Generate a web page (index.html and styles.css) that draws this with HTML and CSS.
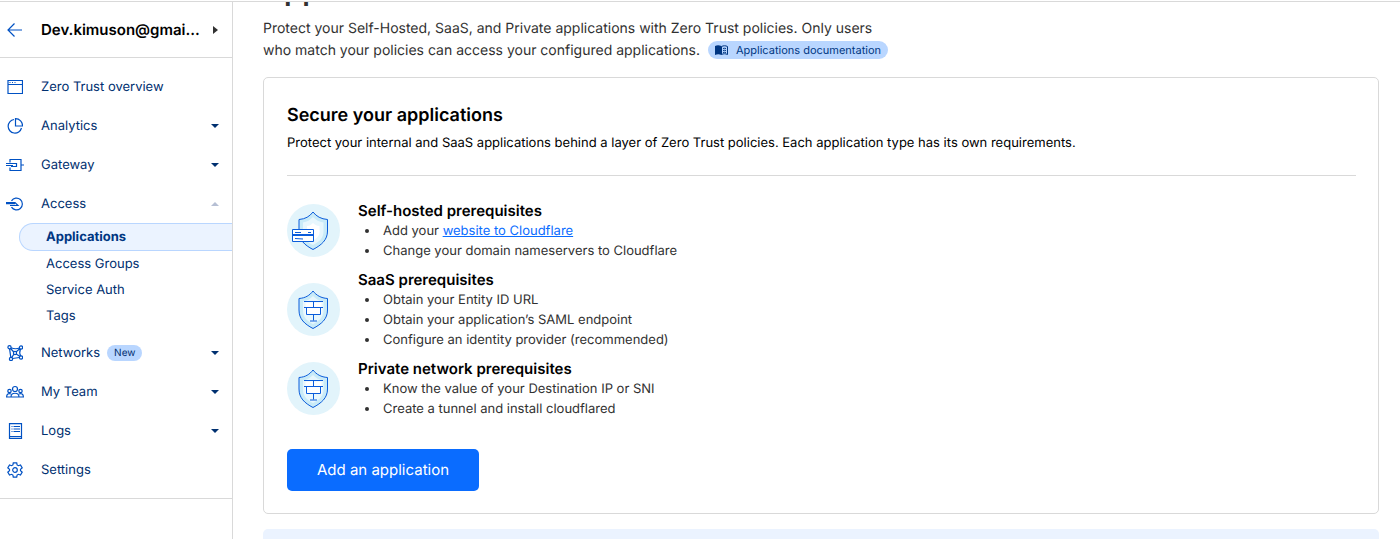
FILE: index.html
```
<!DOCTYPE html>
<html lang="en">

<head>
    <meta charset="UTF-8">
    <meta name="viewport" content="width=device-width, initial-scale=1.0">
    <title>Applications | Zero Trust</title>
    <link rel="stylesheet" href="styles.css">
</head>

<body>
    <aside class="sidebar">
        <div class="account">
            <a class="back" href="#" aria-label="Back">
                <svg class="icon" viewBox="0 0 16 16"><path d="M15 8H1.5M7.500 1.500L1 8l6.500 6.500"/></svg>
            </a>
            <button class="account-name" type="button">
                <span>Dev.kimuson@gmai...</span>
                <svg class="caret-right" viewBox="0 0 5 8"><path d="M0 0l5 4-5 4z"/></svg>
            </button>
        </div>

        <nav class="nav">
            <a class="nav-item" href="#">
                <svg class="icon" viewBox="0 0 16 16"><path d="M1 1.500h14.500v13H1zM1 5.500h14.500"/><path d="M2.500 3.500h1M5 3.500h1M7.500 3.500h1"/></svg>
                <span>Zero Trust overview</span>
            </a>
            <a class="nav-item" href="#">
                <svg class="icon" viewBox="0 0 16 16"><path d="M7 1.500a6.800 6.800 0 1 0 7.500 8.500"/><path d="M8.500.600a7 7 0 0 1 7 7.400h-7z"/></svg>
                <span>Analytics</span>
                <svg class="caret" viewBox="0 0 8 4"><path d="M0 0h8L4 4z"/></svg>
            </a>
            <a class="nav-item" href="#">
                <svg class="icon icon-wide" viewBox="0 0 18 16"><path d="M4 5.500v-3h11v11H4v-3M0 6.500h10.500v3H5M0 8.500h7M15 8h3"/></svg>
                <span>Gateway</span>
                <svg class="caret" viewBox="0 0 8 4"><path d="M0 0h8L4 4z"/></svg>
            </a>
            <a class="nav-item" href="#">
                <svg class="icon icon-wide" viewBox="0 0 18 16"><path d="M5.500 4.800a5.900 5.900 0 1 1 0 6.400M0 6.500h9l3 3H4M0 7.700h9"/></svg>
                <span>Access</span>
                <svg class="caret caret-open" viewBox="0 0 8 4"><path d="M0 4h8L4 0z"/></svg>
            </a>
            <div class="subnav">
                <a class="subnav-item active" href="#">Applications</a>
                <a class="subnav-item" href="#">Access Groups</a>
                <a class="subnav-item" href="#">Service Auth</a>
                <a class="subnav-item" href="#">Tags</a>
            </div>
            <a class="nav-item" href="#">
                <svg class="icon" viewBox="0 0 16 16"><circle cx="2.500" cy="2.200" r="1.600"/><circle cx="14" cy="2.500" r="1.600"/><circle cx="4" cy="14" r="1.600"/><circle cx="14" cy="12.500" r="1.600"/><circle cx="8" cy="8" r="1.600"/><path d="M4 2.800c3 1.200 6 1.200 8.500.2M2.600 3.800l1.200 8.600M5.500 13.500l7-1M13.500 4c-1 2.500-1 5 .2 7M9 7l4-3.500M9.200 9l3.800 2.600M7 9l-2.300 3.600M6.800 7L3.600 3.500"/></svg>
                <span>Networks</span>
                <span class="badge">New</span>
                <svg class="caret" viewBox="0 0 8 4"><path d="M0 0h8L4 4z"/></svg>
            </a>
            <a class="nav-item" href="#">
                <svg class="icon icon-wide" viewBox="0 0 18 16"><circle cx="9" cy="5" r="2.500"/><circle cx="3.500" cy="7" r="1.700"/><circle cx="14.500" cy="7" r="1.700"/><path d="M5 13c0-5 8-5 8 0zM5 13H.6c0-3 1.900-4 4.400-3M13 13h4.400c0-3-1.900-4-4.400-3"/></svg>
                <span>My Team</span>
                <svg class="caret" viewBox="0 0 8 4"><path d="M0 0h8L4 4z"/></svg>
            </a>
            <a class="nav-item" href="#">
                <svg class="icon" viewBox="0 0 16 16"><path d="M2.500.600h12v14.800h-12zM2.500 13.500h12M4.500 3.500h1M6.500 3.500H13M4.500 6h1M6.500 6H13M4.500 8.500h1M6.500 8.500H13"/></svg>
                <span>Logs</span>
                <svg class="caret" viewBox="0 0 8 4"><path d="M0 0h8L4 4z"/></svg>
            </a>
            <a class="nav-item" href="#">
                <svg class="icon" viewBox="0 0 16 16"><circle cx="8" cy="8" r="2.300"/><path d="M6.300.8h3.400l.4 2.100 1.300.8 2.100-.8 1.700 3-1.700 1.400v1.400l1.700 1.400-1.700 3-2.100-.8-1.300.8-.4 2.100H6.300l-.4-2.100-1.300-.8-2.100.8-1.700-3 1.700-1.400V7.300L.8 5.900l1.700-3 2.100.8 1.300-.8z"/></svg>
                <span>Settings</span>
            </a>
        </nav>
    </aside>

    <main class="content">
        <h1>Applications</h1>
        <p class="intro">
            Protect your Self-Hosted, SaaS, and Private applications with Zero Trust policies. Only users who match your policies can access your configured applications.
            <a class="docs" href="#">
                <svg viewBox="0 0 13 10"><path class="book-left" d="M0 1c2-1 4-1 6.500 0v9C4.500 9 2 9 0 10z"/><path class="book-right" d="M6.500 1.500c2-1 4-1 6 0v8c-2-1-4-1-6 0zM8 3.500q1.500-.5 3 0M8 5.500q1.500-.5 3 0M8 7.500q1.500-.5 3 0"/></svg>
                <span>Applications documentation</span>
            </a>
        </p>

        <section class="card">
            <h2>Secure your applications</h2>
            <p class="card-text">Protect your internal and SaaS applications behind a layer of Zero Trust policies. Each application type has its own requirements.</p>
            <hr>

            <div class="requirements">
                <div class="requirement">
                    <svg class="shield" viewBox="0 0 53 53">
                        <circle class="disc" cx="26.500" cy="26.500" r="26.500"/>
                        <path class="outer" d="M26 8c3.500 4.500 8 7 14.500 7.500v11.500c0 9-6 14-14.500 18.500C17.500 41 12 36 12 27V15.500C18.500 15 22.500 12.500 26 8z"/>
                        <path class="middle" d="M26 13c3 3 6 5 10.500 5.500v9c0 6.500-4 10-10.500 13.500-6.500-3.500-10-7-10-13.500v-9C20 18 23 16 26 13z"/>
                        <path class="inner" d="M26 19c2 2 4 3 6.500 3v6c0 4-2.500 6-6.500 8.500-4-2.500-6-4.500-6-8.500v-6c2.500 0 4-1 6-3z"/>
                        <path class="panel" d="M5.500 25.500h21v12h-21z"/>
                        <path class="line" d="M5.500 30.500h21M5.500 31.500h21M8 28.500h6M21 28.500h3M8 34.500l8 .5"/>
                    </svg>
                    <div>
                        <h3>Self-hosted prerequisites</h3>
                        <ul>
                            <li>Add your <a href="#">website to Cloudflare</a></li>
                            <li>Change your domain nameservers to Cloudflare</li>
                        </ul>
                    </div>
                </div>
                <div class="requirement">
                    <svg class="shield" viewBox="0 0 53 53">
                        <circle class="disc" cx="26.500" cy="26.500" r="26.500"/>
                        <path class="outer" d="M26 8c3.500 4.500 8 7 14.500 7.500v11.500c0 9-6 14-14.500 18.500C17.500 41 12 36 12 27V15.500C18.500 15 22.500 12.500 26 8z"/>
                        <path class="middle" d="M26 13c3 3 6 5 10.500 5.500v9c0 6.500-4 10-10.500 13.500-6.500-3.500-10-7-10-13.500v-9C20 18 23 16 26 13z"/>
                        <path class="wall" d="M18.500 19.500h16v12.500h-16z"/>
                        <path class="line" d="M17 18.500h19M17 24.500h19M26.500 18.500v6M19.500 24.500v7h14v-7M26.500 31.500v6M23 38h7"/>
                    </svg>
                    <div>
                        <h3>SaaS prerequisites</h3>
                        <ul>
                            <li>Obtain your Entity ID URL</li>
                            <li>Obtain your application’s SAML endpoint</li>
                            <li>Configure an identity provider (recommended)</li>
                        </ul>
                    </div>
                </div>
                <div class="requirement">
                    <svg class="shield" viewBox="0 0 53 53">
                        <circle class="disc" cx="26.500" cy="26.500" r="26.500"/>
                        <path class="outer" d="M26 8c3.500 4.500 8 7 14.500 7.500v11.500c0 9-6 14-14.500 18.500C17.500 41 12 36 12 27V15.500C18.500 15 22.500 12.500 26 8z"/>
                        <path class="middle" d="M26 13c3 3 6 5 10.500 5.500v9c0 6.500-4 10-10.500 13.500-6.500-3.500-10-7-10-13.500v-9C20 18 23 16 26 13z"/>
                        <path class="wall" d="M18.500 19.500h16v12.500h-16z"/>
                        <path class="line" d="M17 18.500h19M17 24.500h19M26.500 18.500v6M19.500 24.500v7h14v-7M26.500 31.500v6M23 38h7"/>
                    </svg>
                    <div>
                        <h3>Private network prerequisites</h3>
                        <ul>
                            <li>Know the value of your Destination IP or SNI</li>
                            <li>Create a tunnel and install cloudflared</li>
                        </ul>
                    </div>
                </div>
            </div>

            <button class="add-button" type="button">Add an application</button>
        </section>

        <div class="notice"></div>
    </main>
</body>

</html>
```

FILE: styles.css
```
* {
    box-sizing: border-box;
}

body {
    margin: 0;
    display: flex;
    height: 100vh;
    padding-top: 1px;
    overflow: hidden;
    font-family: Inter, "Liberation Sans", sans-serif;
    font-size: 13px;
    line-height: 20px;
    text-rendering: geometricPrecision;
    color: #313131;
    background-color: white;
}

h1, h2, h3, p, ul {
    margin: 0;
}

a {
    color: #0a6cff;
}

button {
    font-family: inherit;
    text-rendering: inherit;
    border: none;
    cursor: pointer;
}

/* Sidebar */
.sidebar {
    flex: none;
    width: 233px;
    border-top: 1px solid #d9d9d9;
    border-right: 1px solid #d9d9d9;
}

.account {
    display: flex;
    align-items: center;
    height: 56px;
    padding: 0 14px 0 7px;
    border-bottom: 1px solid #d9d9d9;
}

.back {
    display: flex;
}

.account-name {
    flex: 1;
    display: flex;
    align-items: center;
    justify-content: space-between;
    padding: 0 0 0 18px;
    background: none;
    font-size: 15px;
    font-weight: 600;
    line-height: 20px;
    color: black;
}

.icon {
    flex: none;
    width: 16px;
    height: 16px;
    fill: none;
    stroke: #0051c3;
    stroke-width: 1.2;
}

.icon-wide {
    width: 18px;
    margin: 0 -1px;
}

.caret-right {
    width: 5px;
    height: 8px;
    fill: #313131;
}

.nav {
    padding: 9px 0;
    border-bottom: 1px solid #d9d9d9;
}

.nav-item {
    display: flex;
    align-items: center;
    height: 39px;
    padding: 0 13px 0 7px;
    color: #003070;
    text-decoration: none;
}

.nav-item span {
    margin-left: 18px;
}

.nav-item .badge {
    margin-left: 7px;
    padding: 0 7px;
    border-radius: 8px;
    background-color: #b9d6ff;
    font-size: 10px;
    line-height: 16px;
}

.caret {
    width: 8px;
    height: 4px;
    margin-left: auto;
    fill: #003070;
}

.caret-open {
    fill: #b6bfd4;
}

.subnav {
    padding: 0 0 4px 19px;
}

.subnav-item {
    display: block;
    padding: 3px 0 3px 27px;
    color: #003070;
    text-decoration: none;
}

.subnav-item.active {
    padding-left: 26px;
    border: 1px solid #b9d6ff;
    border-right: none;
    border-radius: 14px 0 0 14px;
    background-color: #ebf3ff;
    font-weight: 700;
    color: #003682;
}

/* Main content */
.content {
    flex: 1;
    padding: 0 21px 0 30px;
    border-top: 1px solid #d9d9d9;
    overflow: hidden;
}

/* The page is scrolled, so only the bottom of the title shows */
h1 {
    margin-top: -28px;
    font-size: 29px;
    font-weight: 600;
    line-height: 32px;
}

.intro {
    max-width: 640px;
    margin-top: 12px;
    font-size: 14px;
    line-height: 22px;
}

.docs {
    display: inline-flex;
    align-items: center;
    gap: 8px;
    margin-left: 4px;
    padding: 0 7px;
    border-radius: 9px;
    background-color: #b9d6ff;
    font-size: 11px;
    line-height: 18px;
    color: #003682;
    text-decoration: none;
}

.docs svg {
    width: 13px;
    height: 10px;
}

.book-left {
    fill: #003682;
}

.book-right {
    fill: none;
    stroke: #003682;
}

.card {
    margin-top: 15px;
    padding: 27px 22px 22px 23px;
    border: 1px solid #d9d9d9;
    border-radius: 5px;
}

h2 {
    font-size: 18px;
    font-weight: 600;
    line-height: 22px;
    color: black;
}

.card-text {
    margin-top: 6px;
    color: black;
}

hr {
    margin: 22px 0 24px;
    border: none;
    border-top: 1px solid #d9d9d9;
}

.requirements {
    display: grid;
    gap: 8px;
}

.requirement {
    display: flex;
    align-items: center;
    gap: 18px;
}

.shield {
    flex: none;
    width: 53px;
    height: 53px;
}

.disc {
    fill: #e2f4fb;
}

.outer {
    fill: #c9ebf8;
    stroke: #0a5cdb;
}

.middle {
    fill: #e8f7fd;
}

.inner, .panel, .wall {
    fill: white;
}

.panel, .line {
    stroke: #0a5cdb;
}

.line {
    fill: none;
}

h3 {
    font-size: 15px;
    font-weight: 600;
    line-height: 21px;
    color: black;
}

ul {
    padding-left: 22px;
}

li {
    padding-left: 3px;
}

.add-button {
    margin-top: 30px;
    padding: 11px 30px;
    border-radius: 5px;
    background-color: #0a6cff;
    font-size: 15px;
    line-height: 20px;
    color: white;
}

.notice {
    height: 60px;
    margin-top: 15px;
    border-radius: 5px;
    background-color: #ebf3ff;
}
```
